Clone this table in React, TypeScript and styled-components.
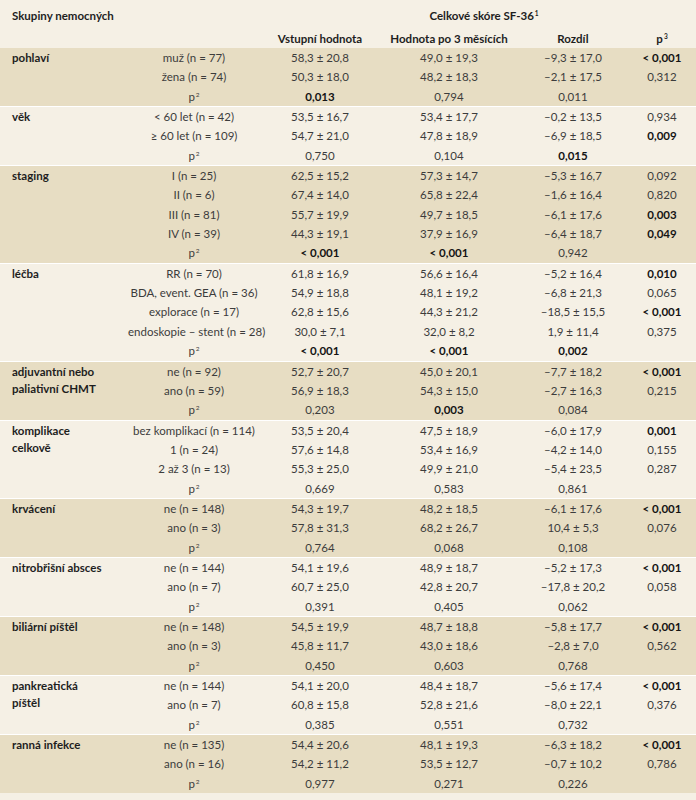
import React from 'react';
import styled, { createGlobalStyle } from 'styled-components';

const GlobalStyle = createGlobalStyle`
  html, body {
    margin: 0;
    padding: 0;
    background: #f5f0e5;
  }
  body {
    font-family: Lato, "Open Sans", sans-serif;
  }
`;

const COLS = '128px 132px 120px 138px 110px 68px';

const Page = styled.div`
  width: 696px;
  height: 800px;
  background: #f5f0e5;
  color: #3c3c3c;
  font-size: 11.5px;
  overflow: hidden;
`;

const Header = styled.div`
  display: grid;
  grid-template-columns: ${COLS};
  grid-template-rows: 28px 20px;
  align-items: center;
`;

const HeadLeft = styled.div`
  grid-column: 1 / span 2;
  grid-row: 1;
  padding: 2px 0 0 12px;
  font-weight: 700;
  color: #1e1e1e;
`;

const HeadSpan = styled.div`
  grid-column: 3 / span 4;
  grid-row: 1;
  padding: 2px 0 0 12px;
  text-align: center;
  font-weight: 700;
  color: #1e1e1e;
`;

const HeadCell = styled.div<{ $col: number }>`
  grid-column: ${(p) => p.$col};
  grid-row: 2;
  text-align: center;
  font-weight: 700;
  color: #1e1e1e;
`;

const Group = styled.div<{ $dark: boolean }>`
  display: grid;
  grid-template-columns: ${COLS};
  grid-auto-rows: 19.35px;
  background: ${(p) => (p.$dark ? '#e7ddc3' : '#f5f0e5')};
  & + & {
    border-top: 1px solid #ffffff;
  }
`;

const Label = styled.div<{ $rows: number }>`
  grid-column: 1;
  grid-row: 1 / span ${(p) => p.$rows};
  padding: 1px 0 0 12px;
  line-height: 17px;
  font-weight: 700;
  color: #1e1e1e;
`;

const Cell = styled.div<{ $bold?: boolean }>`
  line-height: 19.35px;
  text-align: center;
  white-space: nowrap;
  font-weight: ${(p) => (p.$bold ? 700 : 400)};
  color: ${(p) => (p.$bold ? '#141414' : '#3c3c3c')};
`;

const Sup = styled.sup`
  font-size: 6.5px;
  line-height: 0;
  vertical-align: 4px;
  margin-left: 1px;
`;

type Row = string[];
type GroupData = { label: string[]; rows: Row[] };

const P2 = 'p²';

const groups: GroupData[] = [
  {
    label: ['pohlaví'],
    rows: [
      ['muž (n = 77)', '58,3 ± 20,8', '49,0 ± 19,3', '–9,3 ± 17,0', '*< 0,001'],
      ['žena (n = 74)', '50,3 ± 18,0', '48,2 ± 18,3', '–2,1 ± 17,5', '0,312'],
      [P2, '*0,013', '0,794', '0,011', ''],
    ],
  },
  {
    label: ['věk'],
    rows: [
      ['< 60 let (n = 42)', '53,5 ± 16,7', '53,4 ± 17,7', '–0,2 ± 13,5', '0,934'],
      ['≥ 60 let (n = 109)', '54,7 ± 21,0', '47,8 ± 18,9', '–6,9 ± 18,5', '*0,009'],
      [P2, '0,750', '0,104', '*0,015', ''],
    ],
  },
  {
    label: ['staging'],
    rows: [
      ['I (n = 25)', '62,5 ± 15,2', '57,3 ± 14,7', '–5,3 ± 16,7', '0,092'],
      ['II (n = 6)', '67,4 ± 14,0', '65,8 ± 22,4', '–1,6 ± 16,4', '0,820'],
      ['III (n = 81)', '55,7 ± 19,9', '49,7 ± 18,5', '–6,1 ± 17,6', '*0,003'],
      ['IV (n = 39)', '44,3 ± 19,1', '37,9 ± 16,9', '–6,4 ± 18,7', '*0,049'],
      [P2, '*< 0,001', '*< 0,001', '0,942', ''],
    ],
  },
  {
    label: ['léčba'],
    rows: [
      ['RR (n = 70)', '61,8 ± 16,9', '56,6 ± 16,4', '–5,2 ± 16,4', '*0,010'],
      ['BDA, event. GEA (n = 36)', '54,9 ± 18,8', '48,1 ± 19,2', '–6,8 ± 21,3', '0,065'],
      ['explorace (n = 17)', '62,8 ± 15,6', '44,3 ± 21,2', '–18,5 ± 15,5', '*< 0,001'],
      ['endoskopie – stent (n = 28)', '30,0 ± 7,1', '32,0 ± 8,2', '1,9 ± 11,4', '0,375'],
      [P2, '*< 0,001', '*< 0,001', '*0,002', ''],
    ],
  },
  {
    label: ['adjuvantní nebo', 'paliativní CHMT'],
    rows: [
      ['ne (n = 92)', '52,7 ± 20,7', '45,0 ± 20,1', '–7,7 ± 18,2', '*< 0,001'],
      ['ano (n = 59)', '56,9 ± 18,3', '54,3 ± 15,0', '–2,7 ± 16,3', '0,215'],
      [P2, '0,203', '*0,003', '0,084', ''],
    ],
  },
  {
    label: ['komplikace', 'celkově'],
    rows: [
      ['bez komplikací (n = 114)', '53,5 ± 20,4', '47,5 ± 18,9', '–6,0 ± 17,9', '*0,001'],
      ['1 (n = 24)', '57,6 ± 14,8', '53,4 ± 16,9', '–4,2 ± 14,0', '0,155'],
      ['2 až 3 (n = 13)', '55,3 ± 25,0', '49,9 ± 21,0', '–5,4 ± 23,5', '0,287'],
      [P2, '0,669', '0,583', '0,861', ''],
    ],
  },
  {
    label: ['krvácení'],
    rows: [
      ['ne (n = 148)', '54,3 ± 19,7', '48,2 ± 18,5', '–6,1 ± 17,6', '*< 0,001'],
      ['ano (n = 3)', '57,8 ± 31,3', '68,2 ± 26,7', '10,4 ± 5,3', '0,076'],
      [P2, '0,764', '0,068', '0,108', ''],
    ],
  },
  {
    label: ['nitrobřišní absces'],
    rows: [
      ['ne (n = 144)', '54,1 ± 19,6', '48,9 ± 18,7', '–5,2 ± 17,3', '*< 0,001'],
      ['ano (n = 7)', '60,7 ± 25,0', '42,8 ± 20,7', '–17,8 ± 20,2', '0,058'],
      [P2, '0,391', '0,405', '0,062', ''],
    ],
  },
  {
    label: ['biliární píštěl'],
    rows: [
      ['ne (n = 148)', '54,5 ± 19,9', '48,7 ± 18,8', '–5,8 ± 17,7', '*< 0,001'],
      ['ano (n = 3)', '45,8 ± 11,7', '43,0 ± 18,6', '–2,8 ± 7,0', '0,562'],
      [P2, '0,450', '0,603', '0,768', ''],
    ],
  },
  {
    label: ['pankreatická', 'píštěl'],
    rows: [
      ['ne (n = 144)', '54,1 ± 20,0', '48,4 ± 18,7', '–5,6 ± 17,4', '*< 0,001'],
      ['ano (n = 7)', '60,8 ± 15,8', '52,8 ± 21,6', '–8,0 ± 22,1', '0,376'],
      [P2, '0,385', '0,551', '0,732', ''],
    ],
  },
  {
    label: ['ranná infekce'],
    rows: [
      ['ne (n = 135)', '54,4 ± 20,6', '48,1 ± 19,3', '–6,3 ± 18,2', '*< 0,001'],
      ['ano (n = 16)', '54,2 ± 11,2', '53,5 ± 12,7', '–0,7 ± 10,2', '0,786'],
      [P2, '0,977', '0,271', '0,226', ''],
    ],
  },
];

const renderText = (text: string) => {
  if (text === P2) {
    return (
      <>
        p<Sup>2</Sup>
      </>
    );
  }
  return text;
};

const App = () => {
  return (
    <Page>
      <GlobalStyle />
      <Header>
        <HeadLeft>Skupiny nemocných</HeadLeft>
        <HeadSpan>
          Celkové skóre SF-36<Sup>1</Sup>
        </HeadSpan>
        <HeadCell $col={3}>Vstupní hodnota</HeadCell>
        <HeadCell $col={4}>Hodnota po 3 měsících</HeadCell>
        <HeadCell $col={5}>Rozdíl</HeadCell>
        <HeadCell $col={6}>
          p<Sup>3</Sup>
        </HeadCell>
      </Header>
      {groups.map((g, gi) => (
        <Group key={gi} $dark={gi % 2 === 0}>
          <Label $rows={g.rows.length}>
            {g.label.map((line, li) => (
              <div key={li}>{line}</div>
            ))}
          </Label>
          {g.rows.map((row, ri) =>
            row.map((value, ci) => {
              const bold = value.startsWith('*');
              const text = bold ? value.slice(1) : value;
              return (
                <Cell
                  key={`${ri}-${ci}`}
                  $bold={bold}
                  style={{ gridRow: ri + 1, gridColumn: ci + 2 }}
                >
                  {renderText(text)}
                </Cell>
              );
            })
          )}
        </Group>
      ))}
    </Page>
  );
};

export default App;
